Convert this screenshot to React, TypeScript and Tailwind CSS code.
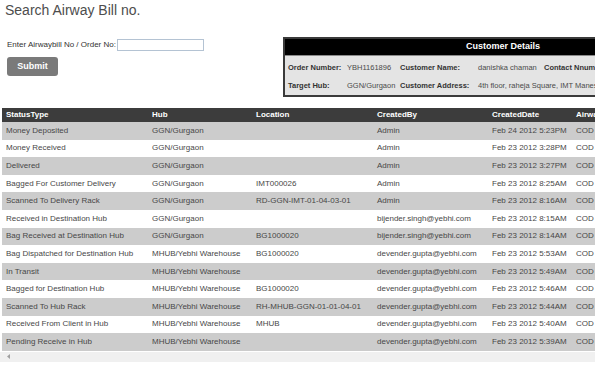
import React from "react";

const rows = [
  ["Money Deposited", "GGN/Gurgaon", "", "Admin", "Feb 24 2012 5:23PM"],
  ["Money Received", "GGN/Gurgaon", "", "Admin", "Feb 23 2012 3:28PM"],
  ["Delivered", "GGN/Gurgaon", "", "Admin", "Feb 23 2012 3:27PM"],
  ["Bagged For Customer Delivery", "GGN/Gurgaon", "IMT000026", "Admin", "Feb 23 2012 8:25AM"],
  ["Scanned To Delivery Rack", "GGN/Gurgaon", "RD-GGN-IMT-01-04-03-01", "Admin", "Feb 23 2012 8:16AM"],
  ["Received in Destination Hub", "GGN/Gurgaon", "", "bijender.singh@yebhi.com", "Feb 23 2012 8:15AM"],
  ["Bag Received at Destination Hub", "GGN/Gurgaon", "BG1000020", "bijender.singh@yebhi.com", "Feb 23 2012 8:14AM"],
  ["Bag Dispatched for Destination Hub", "MHUB/Yebhi Warehouse", "BG1000020", "devender.gupta@yebhi.com", "Feb 23 2012 5:53AM"],
  ["In Transit", "MHUB/Yebhi Warehouse", "", "devender.gupta@yebhi.com", "Feb 23 2012 5:49AM"],
  ["Bagged for Destination Hub", "MHUB/Yebhi Warehouse", "BG1000020", "devender.gupta@yebhi.com", "Feb 23 2012 5:46AM"],
  ["Scanned To Hub Rack", "MHUB/Yebhi Warehouse", "RH-MHUB-GGN-01-01-04-01", "devender.gupta@yebhi.com", "Feb 23 2012 5:44AM"],
  ["Received From Client in Hub", "MHUB/Yebhi Warehouse", "MHUB", "devender.gupta@yebhi.com", "Feb 23 2012 5:40AM"],
  ["Pending Receive in Hub", "MHUB/Yebhi Warehouse", "", "devender.gupta@yebhi.com", "Feb 23 2012 5:39AM"],
];

const headers = ["StatusType", "Hub", "Location", "CreatedBy", "CreatedDate", "AirwaybillNo"];

// column widths, text sits 4px in from each edge
const cols = ["w-[146px]", "w-[104px]", "w-[121px]", "w-[115px]", "w-[84px]", "w-[100px]"];

export default function App() {
  return (
    <div className="w-[595px] h-[371px] overflow-hidden bg-white font-['Liberation_Sans',Arial,sans-serif]">
      <h1 className="h-[18px] pt-[2px] pl-[5px] text-[14px] leading-[16px] text-[#4d4d4d]">
        Search Airway Bill no.
      </h1>

      <div className="mt-[19px] flex">
        {/* search form */}
        <div className="w-[283px] shrink-0 pt-[2px] pl-[7px]">
          <div className="flex items-center h-[12px]">
            <span className="w-[110px] text-[8px] text-[#333]">Enter Airwaybill No / Order No:</span>
            <input
              type="text"
              className="w-[87px] h-[12px] border border-[#b4c3d3] bg-white outline-none"
            />
          </div>
          <button className="mt-[6px] w-[51px] h-[19px] rounded-[3px] bg-[#7a7a7a] text-white text-[9px] font-bold">
            Submit
          </button>
        </div>

        {/* customer box */}
        <div className="w-[440px] h-[60px] shrink-0 border-2 border-[#3a3a3a] bg-[#e4e4e4]">
          <div className="h-[16px] bg-black text-white text-[9px] font-bold flex items-center justify-center">
            Customer Details
          </div>
          <div className="border-t border-[#8a8a8a] pt-[3px] pl-[3px] text-[7.5px]">
            <div className="flex h-[17.5px] items-center">
              <span className="w-[59px] font-bold text-[#333]">Order Number:</span>
              <span className="w-[53px] text-[#4a4a4a]">YBH1161896</span>
              <span className="w-[78px] font-bold text-[#333]">Customer Name:</span>
              <span className="w-[66px] text-[#4a4a4a]">danishka chaman</span>
              <span className="font-bold text-[#333]">Contact Nnumber:</span>
            </div>
            <div className="flex h-[17.5px] items-center">
              <span className="w-[59px] font-bold text-[#333]">Target Hub:</span>
              <span className="w-[53px] text-[#4a4a4a]">GGN/Gurgaon</span>
              <span className="w-[78px] font-bold text-[#333]">Customer Address:</span>
              <span className="text-[#4a4a4a] whitespace-nowrap">4th floor, raheja Square, IMT Manesar</span>
            </div>
          </div>
        </div>
      </div>

      {/* history table */}
      <div className="mt-[11px] ml-[2px] w-[593px] overflow-hidden">
        <div className="w-[670px] text-[8px]">
          <div className="flex h-[14px] items-center bg-[#3c3c3c] text-white font-bold">
            {headers.map((h, i) => (
              <div key={h} className={`${cols[i]} shrink-0 pl-[4px] whitespace-nowrap`}>
                {h}
              </div>
            ))}
          </div>
          {rows.map((r, idx) => (
            <div
              key={idx}
              className={`flex h-[17.6px] items-center text-[#474747] ${idx % 2 === 0 ? "bg-[#cccccc]" : "bg-white"}`}
            >
              {[...r, "COD"].map((c, i) => (
                <div key={i} className={`${cols[i]} shrink-0 pl-[4px] whitespace-nowrap`}>
                  {c}
                </div>
              ))}
            </div>
          ))}
        </div>
      </div>

      {/* horizontal scrollbar */}
      <div className="mt-[1px] h-[10px] bg-[#f0f0f0] flex items-center pl-[7px]">
        <svg width="4" height="5" viewBox="0 0 4 5">
          <path d="M3 0 L0 2.5 L3 5 Z" fill="#a0a0a0" />
        </svg>
      </div>
    </div>
  );
}
